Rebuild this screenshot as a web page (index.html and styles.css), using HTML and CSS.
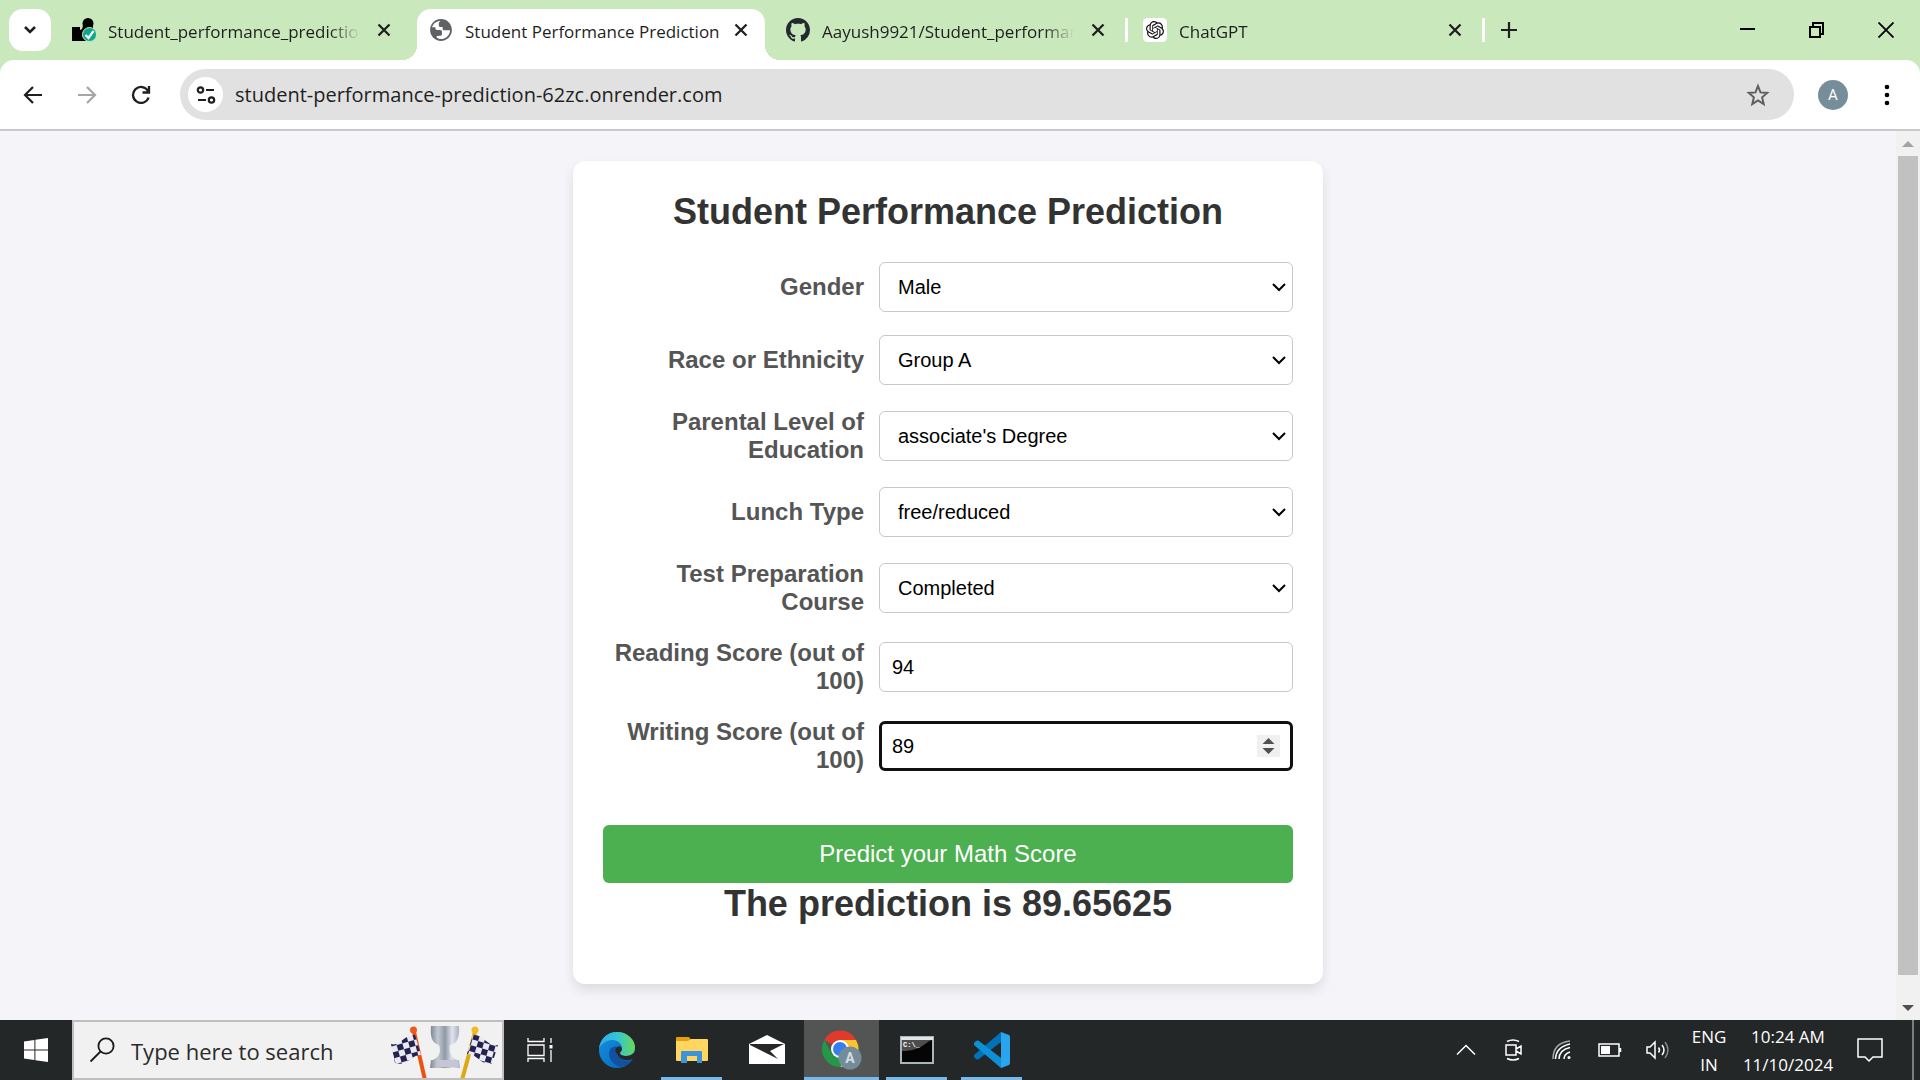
FILE: index.html
```html
<!DOCTYPE html>
<html lang="en">
<head>
<meta charset="utf-8">
<title>Student Performance Prediction</title>
<link rel="stylesheet" href="styles.css">
</head>
<body>
<header class="browser">
  <div class="tabstrip">
    <button class="tab-search" aria-label="Search tabs"><svg width="14" height="10" viewBox="0 0 14 10"><path d="M2 2l5 5 5-5" fill="none" stroke="#1f1f1f" stroke-width="2.6"/></svg></button>
    <div class="tab">
      <svg class="favicon" viewBox="0 0 24 24"><circle cx="16" cy="5.500" r="5.500" fill="#000"/><path d="M0 9h8v3c2 0 3-3 3-6h10v17H0z" fill="#000"/><circle cx="17.500" cy="16.500" r="7" fill="#0aa68d" stroke="#c9e9bd"/><path d="M13.500 17l3 3 5-7" fill="none" stroke="#fff" stroke-width="2.200"/></svg>
      <span class="tab-title">Student_performance_prediction</span>
      <button class="icon-button" aria-label="Close tab"><svg width="14" height="14" viewBox="0 0 14 14"><path d="M1.500 1.500l11 11m0-11l-11 11" stroke="#1f1f1f" stroke-width="2.300"/></svg></button>
    </div>
    <span class="separator hidden"></span>
    <div class="tab active">
      <svg class="favicon" viewBox="1 1 22 22"><path fill="#5f6368" d="M12 2C6.480 2 2 6.480 2 12s4.480 10 10 10 10-4.480 10-10S17.520 2 12 2zm1.500 18.200c-2 .2-4-.3-5.400-1.400V17.500l3.300-.2c1-.1 1.500-.8 1.500-1.600v-2c0-1-.7-1.700-1.800-1.700H8.500c-1 0-1.600-.5-1.600-1.300V9.500H3.800C4.800 5.800 8 3.700 11.500 3.700c-1.200.8-1.500 1.500-1.500 2.400v1.700c0 .8.600 1.400 1.500 1.400h2v1.600c0 .8.700 1.500 1.600 1.500h5.200c0 3.800-3 7.300-6.800 7.900z"/></svg>
      <span class="tab-title">Student Performance Prediction</span>
      <button class="icon-button" aria-label="Close tab"><svg width="14" height="14" viewBox="0 0 14 14"><path d="M1.500 1.500l11 11m0-11l-11 11" stroke="#1f1f1f" stroke-width="2.300"/></svg></button>
    </div>
    <span class="separator hidden"></span>
    <div class="tab">
      <svg class="favicon" viewBox="0 0 16 16"><path fill="#24292f" d="M8 0C3.580 0 0 3.580 0 8c0 3.540 2.290 6.530 5.470 7.590.4.070.55-.17.55-.38 0-.19-.01-.82-.01-1.490-2.010.37-2.530-.49-2.690-.94-.09-.23-.48-.94-.82-1.130-.28-.15-.68-.52-.01-.53.63-.01 1.080.58 1.230.82.72 1.210 1.870.87 2.330.66.070-.52.28-.87.51-1.070-1.780-.2-3.640-.89-3.640-3.950 0-.87.31-1.590.82-2.150-.08-.2-.36-1.020.08-2.120 0 0 .67-.21 2.200.82.64-.18 1.320-.27 2-.27s1.360.09 2 .27c1.530-1.040 2.200-.82 2.200-.82.44 1.100.16 1.920.08 2.120.51.56.82 1.270.82 2.150 0 3.070-1.870 3.750-3.650 3.950.29.25.54.73.54 1.480 0 1.070-.01 1.930-.01 2.200 0 .21.15.46.55.38A8.010 8.010 0 0 0 16 8c0-4.420-3.580-8-8-8z"/></svg>
      <span class="tab-title">Aayush9921/Student_performance</span>
      <button class="icon-button" aria-label="Close tab"><svg width="14" height="14" viewBox="0 0 14 14"><path d="M1.500 1.500l11 11m0-11l-11 11" stroke="#1f1f1f" stroke-width="2.300"/></svg></button>
    </div>
    <span class="separator"></span>
    <div class="tab">
      <svg class="favicon" viewBox="-4 -4 32 32"><rect x="-4" y="-4" width="32" height="32" rx="6" fill="#fff"/><path fill="#111" d="M22.2819 9.8211a5.9847 5.9847 0 0 0-.5157-4.9108 6.0462 6.0462 0 0 0-6.5098-2.9A6.0651 6.0651 0 0 0 4.9807 4.1818a5.9847 5.9847 0 0 0-3.9977 2.9 6.0462 6.0462 0 0 0 .7427 7.0966 5.98 5.98 0 0 0 .511 4.9107 6.051 6.051 0 0 0 6.5146 2.9001A5.9847 5.9847 0 0 0 13.2599 24a6.0557 6.0557 0 0 0 5.7718-4.2058 5.9894 5.9894 0 0 0 3.9977-2.9001 6.0557 6.0557 0 0 0-.7475-7.0729zm-9.022 12.6081a4.4755 4.4755 0 0 1-2.8764-1.0408l.1419-.0804 4.7783-2.7582a.7948.7948 0 0 0 .3927-.6813v-6.7369l2.02 1.1686a.071.071 0 0 1 .038.052v5.5826a4.504 4.504 0 0 1-4.4945 4.4944zm-9.6607-4.1254a4.4708 4.4708 0 0 1-.5346-3.0137l.142.0852 4.783 2.7582a.7712.7712 0 0 0 .7806 0l5.8428-3.3685v2.3324a.0804.0804 0 0 1-.0332.0615L9.74 19.9502a4.4992 4.4992 0 0 1-6.1408-1.6464zM2.3408 7.8956a4.485 4.485 0 0 1 2.3655-1.9728V11.6a.7664.7664 0 0 0 .3879.6765l5.8144 3.3543-2.0201 1.1685a.0757.0757 0 0 1-.071 0l-4.8303-2.7865A4.504 4.504 0 0 1 2.3408 7.872zm16.5963 3.8558L13.1038 8.364 15.1192 7.2a.0757.0757 0 0 1 .071 0l4.8303 2.7913a4.4944 4.4944 0 0 1-.6765 8.1042v-5.6772a.79.79 0 0 0-.407-.667zm2.0107-3.0231l-.142-.0852-4.7735-2.7818a.7759.7759 0 0 0-.7854 0L9.409 9.2297V6.8974a.0662.0662 0 0 1 .0284-.0615l4.8303-2.7866a4.4992 4.4992 0 0 1 6.6802 4.66zM8.3065 12.863l-2.02-1.1638a.0804.0804 0 0 1-.038-.0567V6.0742a4.4992 4.4992 0 0 1 7.3757-3.4537l-.142.0805L8.704 5.459a.7948.7948 0 0 0-.3927.6813zm1.0976-2.3654l2.602-1.4998 2.6069 1.4998v2.9994l-2.5974 1.4997-2.6067-1.4997Z"/></svg>
      <span class="tab-title">ChatGPT</span>
      <button class="icon-button" aria-label="Close tab"><svg width="14" height="14" viewBox="0 0 14 14"><path d="M1.500 1.500l11 11m0-11l-11 11" stroke="#1f1f1f" stroke-width="2.300"/></svg></button>
    </div>
    <span class="separator"></span>
    <button class="new-tab" aria-label="New tab"><svg width="16" height="16" viewBox="0 0 16 16"><path d="M8 0v16M0 8h16" stroke="#1f1f1f" stroke-width="2.200"/></svg></button>
    <div class="window-controls">
      <button aria-label="Minimize"><svg width="16" height="16" viewBox="0 0 16 16"><path d="M0 7h15" stroke="#000" stroke-width="2"/></svg></button>
      <button aria-label="Restore"><svg width="16" height="16" viewBox="0 0 16 16"><path d="M1 5h10v10H1zM4 4V1h10v11h-3" fill="none" stroke="#000" stroke-width="2"/></svg></button>
      <button aria-label="Close"><svg width="16" height="16" viewBox="0 0 16 16"><path d="M.5.5l15 15m0-15l-15 15" stroke="#000" stroke-width="1.800"/></svg></button>
    </div>
  </div>
  <nav class="toolbar">
    <button class="nav-button" aria-label="Back"><svg width="20" height="20" viewBox="0 0 20 20"><path d="M19 10H2.500M10 2l-8 8 8 8" fill="none" stroke="#1f1f1f" stroke-width="2.200"/></svg></button>
    <button class="nav-button" aria-label="Forward" disabled><svg width="20" height="20" viewBox="0 0 20 20"><path d="M1 10h16.500M10 2l8 8-8 8" fill="none" stroke="#a6a6a6" stroke-width="2.200"/></svg></button>
    <button class="nav-button" aria-label="Reload"><svg width="20" height="20" viewBox="0 0 20 20"><path d="M17.600 12.500A8 8 0 1 1 17 6M18 1v6.500h-6.500" fill="none" stroke="#1f1f1f" stroke-width="2.300"/></svg></button>
    <div class="omnibox">
      <button class="site-info" aria-label="View site information"><svg width="20" height="18" viewBox="0 0 20 18"><g fill="none" stroke="#1f1f1f" stroke-width="2.200"><circle cx="4.500" cy="4" r="2.700"/><circle cx="15.500" cy="14" r="2.700"/><path d="M10 4h8M2 14h8"/></g></svg></button>
      <input class="url" type="text" aria-label="Address" value="student-performance-prediction-62zc.onrender.com">
      <button class="icon-button" aria-label="Bookmark this tab"><svg width="24" height="24" viewBox="0 0 24 24"><path d="M12 3l2.500 6.400 6.700.5-5.100 4.400 1.600 6.700-5.700-3.600L6.300 21l1.600-6.700-5.100-4.400 6.700-.5z" fill="none" stroke="#5c5f62" stroke-width="2"/></svg></button>
    </div>
    <button class="avatar" aria-label="Profile">A</button>
    <button class="menu" aria-label="Menu"><svg width="6" height="22" viewBox="0 0 6 22"><circle cx="3" cy="3" r="2.300"/><circle cx="3" cy="11" r="2.300"/><circle cx="3" cy="19" r="2.300"/></svg></button>
  </nav>
</header>

<div class="viewport">
  <main class="page">
    <section class="card">
      <h1>Student Performance Prediction</h1>
      <form>
        <div class="row"><label for="gender">Gender</label>
          <div class="field"><select id="gender"><option>Male</option></select><svg class="chevron" viewBox="0 0 14 10"><path d="M1 2l6 6 6-6" /></svg></div></div>
        <div class="row"><label for="race">Race or Ethnicity</label>
          <div class="field"><select id="race"><option>Group A</option></select><svg class="chevron" viewBox="0 0 14 10"><path d="M1 2l6 6 6-6" /></svg></div></div>
        <div class="row"><label for="education">Parental Level of Education</label>
          <div class="field"><select id="education"><option>associate's Degree</option></select><svg class="chevron" viewBox="0 0 14 10"><path d="M1 2l6 6 6-6" /></svg></div></div>
        <div class="row"><label for="lunch">Lunch Type</label>
          <div class="field"><select id="lunch"><option>free/reduced</option></select><svg class="chevron" viewBox="0 0 14 10"><path d="M1 2l6 6 6-6" /></svg></div></div>
        <div class="row"><label for="course">Test Preparation Course</label>
          <div class="field"><select id="course"><option>Completed</option></select><svg class="chevron" viewBox="0 0 14 10"><path d="M1 2l6 6 6-6" /></svg></div></div>
        <div class="row"><label for="reading">Reading Score (out of 100)</label>
          <div class="field"><input id="reading" type="number" min="0" max="100" value="94"></div></div>
        <div class="row"><label for="writing">Writing Score (out of 100)</label>
          <div class="field"><input id="writing" class="focused" type="number" min="0" max="100" value="89"><svg class="spinner" viewBox="0 0 23 22"><path fill="#f0f0f0" d="M0 0h23v22H0z"/><path fill="#505050" d="M5.500 9l6-6 6 6zM5.500 13l6 6 6-6z"/></svg></div></div>
        <button class="submit" type="button">Predict your Math Score</button>
      </form>
      <h2>The prediction is 89.65625</h2>
    </section>
  </main>
  <div class="scrollbar" aria-hidden="true">
    <svg width="12" height="6" viewBox="0 0 12 6"><path d="M0 6l6-6 6 6z" fill="#a3a3a3"/></svg>
    <div class="thumb"></div>
    <svg width="12" height="6" viewBox="0 0 12 6"><path d="M0 0l6 6 6-6z" fill="#505050"/></svg>
  </div>
</div>

<footer class="taskbar">
  <button class="start" aria-label="Start"><svg width="24" height="24" viewBox="0 0 24 24"><path fill="#fff" d="M0 3.400l10.400-1.500v9.500H0zM11.400 1.700L24 0v11.400H11.400zM0 12.400h10.400v9.700L0 20.600zM11.400 12.400H24V24l-12.600-1.700z"/></svg></button>
  <label class="search">
    <svg width="26" height="26" viewBox="0 0 26 26"><g fill="none" stroke="#1a1a1a" stroke-width="1.800"><circle cx="17" cy="9" r="7.600"/><path d="M11.500 14.500L1.500 24.500"/></g></svg>
    <input type="text" placeholder="Type here to search" aria-label="Type here to search">
    <svg class="race" viewBox="0 0 108 56">
      <defs>
        <linearGradient id="silver"><stop offset="0" stop-color="#7d8793"/><stop offset=".25" stop-color="#c3c9d3"/><stop offset=".5" stop-color="#8f99a6"/><stop offset=".75" stop-color="#dfe3ee"/><stop offset="1" stop-color="#aab0c4"/></linearGradient>
        <pattern id="checks" width="12" height="12" patternUnits="userSpaceOnUse" patternTransform="rotate(-16)"><path fill="#e9e9f3" d="M0 0h12v12H0z"/><path fill="#25224f" d="M0 0h6v6H0zM6 6h6v6H6z"/></pattern>
        <pattern id="checks-right" width="12" height="12" patternUnits="userSpaceOnUse" patternTransform="rotate(16)"><path fill="#e9e9f3" d="M0 0h12v12H0z"/><path fill="#25224f" d="M0 0h6v6H0zM6 6h6v6H6z"/></pattern>
      </defs>
      <path d="M24 10l11 48" stroke="#ed5110" stroke-width="4"/><circle cx="23.500" cy="8" r="3.500" fill="#ed5a1b"/>
      <path fill="url(#checks)" d="M1 22c9 3 13-10 24-9l6 20c-10-1-13 12-26 8z"/>
      <path d="M85 10L72 58" stroke="#dda811" stroke-width="4"/><circle cx="85" cy="8" r="3.500" fill="#f2bd1a"/>
      <path fill="url(#checks-right)" d="M83 13c11-1 14 12 25 10l-6 19c-12 1-14-10-25-10z"/>
      <path fill="url(#silver)" d="M41 4h28c1 11-2 18-9 19-1 6 0 12 7 15v7H43v-7c7-3 8-9 6-15-7-2-9-8-8-19z"/><path fill="url(#silver)" d="M41 38h28l1 8H40z"/><path fill="#c7c5d4" d="M49 38h19v7H49z"/>
    </svg>
  </label>
  <button class="task-view" aria-label="Task View"><svg width="26" height="24" viewBox="0 0 26 24"><path fill="none" stroke="#fff" stroke-width="1.300" d="M1 0v3.500h16V0M1 7h16v10.500H1zM1 24v-3.500h16V24M24 0v5M24 12v12"/><path fill="#fff" d="M22.500 7h3v3.500h-3z"/></svg></button>
  <button class="app" aria-label="Edge"><svg width="36" height="36" viewBox="0 0 36 36"><defs><linearGradient id="edge-top"><stop offset="0" stop-color="#2faaea"/><stop offset=".5" stop-color="#35c3d6"/><stop offset="1" stop-color="#67dc54"/></linearGradient><linearGradient id="edge-body" x2="1" y2="1"><stop offset="0" stop-color="#1494e0"/><stop offset="1" stop-color="#0a5fb8"/></linearGradient></defs><circle cx="18" cy="18" r="18" fill="url(#edge-body)"/><path fill="#1250a0" d="M12 16c-5 7 1 17 10 19 5-1 9-4 12-8-6 4-14 1-16-5-1-3-1-5 0-7-2-1-4 0-6 1z"/><path fill="url(#edge-top)" d="M0 17C1 7 8 0 18 0c11 0 18 8 18 15 0 6-4 9-9 9-4 0-6-1-6-3 0-1 2-2 2-5 0-4-4-8-10-8C7 8 2 12 0 17z"/><path fill="#252827" d="M18 22c-5-6 4-11 5-5 0 2-2 3-2 4 0 2 3 3 6 3 3 0 6-1 9-4v5c-3 3-5 3-8 3-5 0-8-2-10-6z"/></svg></button>
  <button class="app running" aria-label="File Explorer"><svg width="32" height="28" viewBox="0 0 32 28"><path fill="#e3a008" d="M0 2q0-1 1-1h12l2 3v5H0z"/><path fill="#ffd65f" d="M1 5h11l3-2h16q1 0 1 1v20q0 1-1 1H1q-1 0-1-1V5z"/><path fill="#3c93dc" d="M5 27V16q0-1 1-1h19q1 0 1 1v11h-5v-7H11v7z"/></svg></button>
  <button class="app" aria-label="Mail"><svg width="36" height="30" viewBox="0 0 36 30"><path fill="#fff" d="M0 9L18 0l18 9v20H0z"/><path fill="#252827" d="M1 9h34L21 16l8 8L1 10z"/></svg></button>
  <button class="app running current" aria-label="Chrome"><svg width="40" height="40" viewBox="0 0 40 40"><path fill="#df3a2c" d="M18 19L2.400 10A18 18 0 0 1 34 10z"/><path fill="#fbc42f" d="M18 10h16A18 18 0 0 1 18 37l8-13z"/><path fill="#249846" d="M2.400 10A18 18 0 0 0 18 37l8-13H10z"/><circle cx="18" cy="19" r="9" fill="#fff"/><circle cx="18" cy="19" r="7" fill="#347eed"/><circle cx="28" cy="28" r="11.500" fill="#738c99"/><text class="badge-letter" x="28" y="33" text-anchor="middle">A</text></svg></button>
  <button class="app running" aria-label="Command Prompt"><svg width="34" height="28" viewBox="0 0 34 28"><path fill="#aeb5b9" d="M0 0h34v28H0z"/><path fill="#dfe5e8" d="M1 1h32v3H1z"/><path fill="#050505" d="M2 4h30v22H2z"/><path fill="#4d4d4d" d="M2 4h30C25 6 22 15 2 15z"/><text class="prompt" x="3" y="11">C:\_</text></svg></button>
  <button class="app running" aria-label="Visual Studio Code"><svg width="36" height="36" viewBox="0 0 36 36"><path fill="#0272b8" d="M27 0v10L5 27q-1 1-3 0l-2-2q-1-1 0-2z"/><path fill="#0c91d7" d="M0 11l2-2q2-1 3 0l22 17v10L0 13q-1-1 0-2z"/><path fill="#2ba4ee" d="M27 0l8 3q1 1 1 2v26q0 1-1 2l-8 3z"/></svg></button>
  <div class="tray">
    <button aria-label="Show hidden icons"><svg width="20" height="12" viewBox="0 0 20 12"><path d="M1 10.500l9-9 9 9"/></svg></button>
    <button aria-label="Meet Now"><svg width="18" height="22" viewBox="0 0 18 22"><path d="M2 2.500q6-3 12 0M2 19.500q6 3 12 0M1 6h10v10H1zM11 10l5-3v8l-5-3"/></svg></button>
    <button aria-label="Network"><svg width="20" height="20" viewBox="0 0 20 20"><path d="M12 19q0-5 6-7M7 19q0-9 11-11.500M3.500 19Q4 7 18 4" /><path d="M1 19Q1 3 18 1" opacity=".6"/><circle class="solid" cx="17" cy="17.500" r="1.500"/></svg></button>
    <button aria-label="Battery"><svg width="24" height="14" viewBox="0 0 24 14"><path d="M1 1h20v12H1zM22.500 5v4"/><path class="solid" d="M3 3h9v8H3z"/></svg></button>
    <button aria-label="Volume"><svg width="24" height="20" viewBox="0 0 24 20"><path d="M1 7h3l5-5v16l-5-5H1zM12.500 7.500q2 2.500 0 5M16 5q4 5 0 10"/><path d="M19 2q6 8 0 16" opacity=".45"/></svg></button>
    <button class="language"><span>ENG</span><span>IN</span></button>
    <button class="clock"><span>10:24 AM</span><span>11/10/2024</span></button>
    <button class="notifications" aria-label="Notifications"><svg width="26" height="26" viewBox="0 0 26 26"><path d="M1 2h24v18H16l-4 4-4-4H1z"/></svg></button>
    <button class="show-desktop" aria-label="Show desktop"></button>
  </div>
</footer>
</body>
</html>
```
FILE: styles.css
```css
* { box-sizing: border-box; }
body {
  margin: 0;
  height: 100vh;
  display: flex;
  flex-direction: column;
  overflow: hidden;
  font-family: "Open Sans", "Noto Sans", sans-serif;
  color: #1f1f1f;
}
button { border: 0; padding: 0; background: none; font: inherit; color: inherit; display: grid; place-items: center; }
input, select { font: inherit; min-width: 0; }
svg { display: block; flex: none; }

/* Browser chrome */
.browser { background: #c9e9bd; flex: none; }
.tabstrip { display: flex; align-items: center; height: 60px; padding-left: 9px; }
.tab-search { width: 42px; height: 42px; border-radius: 14px; background: #fff; flex: none; margin-right: 9px; }
.tab {
  flex: 0 1 348px;
  min-width: 0;
  display: flex;
  align-items: center;
  gap: 12px;
  padding: 0 12px;
  height: 42px;
  position: relative;
}
.tab.active { background: #fff; border-radius: 14px 14px 0 0; align-self: flex-end; height: 51px; padding-bottom: 9px; }
.tab.active::before, .tab.active::after {
  content: "";
  position: absolute;
  bottom: 0;
  width: 15px;
  height: 15px;
}
.tab.active::before { right: 100%; background: radial-gradient(circle at 0 0, transparent 15px, #fff 15px); }
.tab.active::after { left: 100%; background: radial-gradient(circle at 100% 0, transparent 15px, #fff 15px); }
.favicon { width: 24px; height: 24px; }
.tab-title {
  flex: 1;
  min-width: 0;
  padding-top: 3px;
  overflow: hidden;
  white-space: nowrap;
  font-size: 17px;
  line-height: 24px;
  -webkit-mask-image: linear-gradient(to right, #000 88%, transparent);
}
.tab.active .tab-title { overflow: visible; -webkit-mask-image: none; }
.icon-button { width: 24px; height: 24px; flex: none; }
.separator { width: 3px; height: 24px; margin: 0 3px; background: #fff; border-radius: 1px; flex: none; }
.separator.hidden { background: transparent; }
.new-tab { width: 42px; height: 42px; flex: none; }
.window-controls { display: flex; margin-left: auto; }
.window-controls button { width: 69px; height: 60px; }

.toolbar {
  display: flex;
  align-items: center;
  height: 71px;
  padding: 0 6px;
  background: #fff;
  border-bottom: 2px solid #c9c9cb;
  border-radius: 14px 14px 0 0;
}
.nav-button { width: 54px; height: 51px; flex: none; }
.omnibox {
  flex: 1;
  display: flex;
  align-items: center;
  gap: 12px;
  height: 51px;
  margin-left: 12px;
  padding: 0 24px 0 8px;
  border-radius: 26px;
  background: #e1e1e1;
}
.site-info { width: 35px; height: 35px; border-radius: 50%; background: #fff; flex: none; }
.url { flex: 1; border: 0; padding: 0; background: none; outline: 0; font-size: 20px; color: #1f1f1f; }
.avatar { width: 30px; height: 30px; margin: 0 24px; border-radius: 50%; background: #768e9a; color: #fff; font: 15px Roboto, sans-serif; flex: none; }
.menu { width: 54px; height: 51px; margin-left: -12px; flex: none; }

/* Page */
.viewport { flex: 1; min-height: 0; display: flex; background: #f4f4f9; }
.page { flex: 1; min-width: 0; overflow: hidden; padding: 30px; font-family: Arial, "Liberation Sans", sans-serif; }
.card {
  max-width: 750px;
  margin: 0 auto;
  padding: 30px 30px 60px;
  border-radius: 12px;
  background: #fff;
  box-shadow: 0 6px 12px rgba(0, 0, 0, .1);
}
h1, h2 { margin: 0; font-size: 36px; line-height: 41px; text-align: center; color: #333; }
h1 { margin-bottom: 30px; }
form { display: flex; flex-direction: column; gap: 23px; }
.row { display: grid; grid-template-columns: 261px 1fr; gap: 15px; align-items: center; }
.row label { text-align: right; font-size: 24px; line-height: 28px; font-weight: bold; color: #555; }
.field { display: grid; align-items: center; }
.field > * { grid-area: 1 / 1; }
.field select, .field input {
  width: 100%;
  height: 50px;
  border: 1px solid #c8c8c8;
  border-radius: 6px;
  background: #fff;
  color: #000;
  font-size: 20px;
  appearance: none;
}
.field select { padding: 0 18px; }
.field input { padding: 0 12px; appearance: textfield; }
.field input::-webkit-inner-spin-button { appearance: none; margin: 0; }
.field input.focused { border: 3px solid #101010; padding: 0 10px; outline: 0; }
.chevron { width: 14px; height: 10px; justify-self: end; margin-right: 7px; fill: none; stroke: #000; stroke-width: 2; pointer-events: none; }
.spinner { width: 23px; height: 22px; justify-self: end; margin-right: 13px; pointer-events: none; }
.submit { width: 100%; height: 58px; margin-top: 28px; border-radius: 6px; background: #4caf50; color: #fff; font-size: 24px; }

.scrollbar { width: 24px; flex: none; display: flex; flex-direction: column; align-items: center; padding: 10px 0 9px; background: #f1f1f1; }
.thumb { flex: 1; width: 20px; margin: 9px 0 30px; background: #c1c1c1; }

/* Taskbar */
.taskbar { display: flex; height: 60px; flex: none; background: #242727; color: #fff; }
.start { width: 72px; }
.search {
  flex: 0 1 432px;
  min-width: 0;
  display: flex;
  align-items: center;
  padding-left: 15px;
  border: 2px solid #bfbfbf;
  background: #f1f1f1;
}
.search input { flex: 1; border: 0; margin-left: 16px; padding: 2px 0 0; background: none; font-size: 22px; }
.search input::placeholder { color: #2b2b2b; opacity: 1; }
.race { width: 108px; height: 56px; margin-right: 4px; }
.task-view { width: 72px; margin-right: 3px; }
.app { width: 75px; flex: none; position: relative; }
.app.running::after { content: ""; position: absolute; left: 7px; right: 7px; bottom: 0; height: 3px; background: #76b9ed; }
.app.current { background: #535555; }
.app.current::after { left: 0; right: 0; }
.badge-letter { font: bold 14px Roboto, sans-serif; fill: #d5dde1; }
.prompt { font: bold 7px "Liberation Mono", monospace; fill: #fff; }
.tray { display: flex; margin-left: auto; font-size: 17px; line-height: 28px; }
.tray button { width: 48px; }
.tray svg { fill: none; stroke: #fff; stroke-width: 1.5; }
.tray .solid { fill: #fff; stroke: none; }
.tray .language, .tray .clock { display: flex; flex-direction: column; align-items: center; justify-content: center; padding-top: 2px; }
.tray .language { width: 54px; }
.tray .clock { width: 104px; }
.tray .notifications { width: 60px; margin-right: 12px; }
.tray .show-desktop { width: 8px; border-left: 2px solid #7c7e7e; }
```
